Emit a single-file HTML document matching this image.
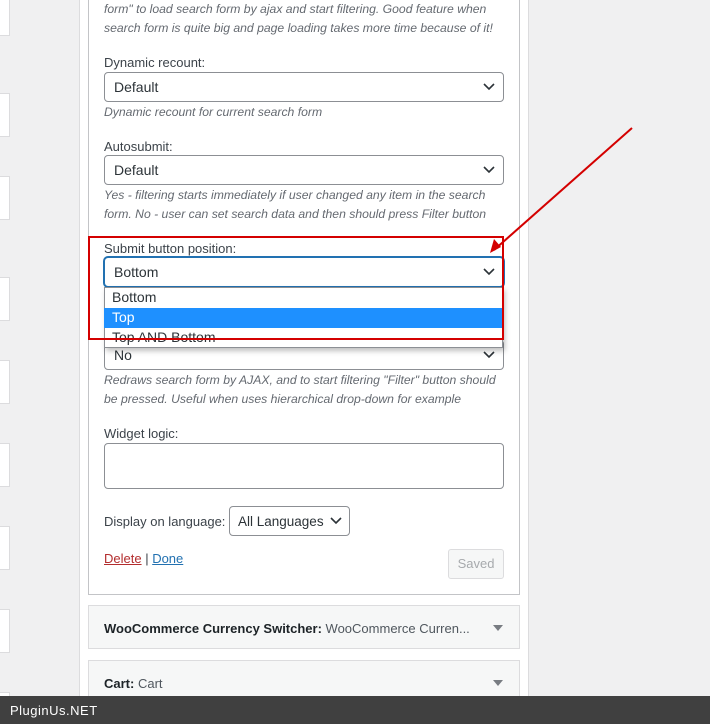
<!DOCTYPE html>
<html><head><meta charset="utf-8"><style>
*{margin:0;padding:0;box-sizing:border-box}
html{width:710px;height:724px;overflow:hidden}
body{width:710px;height:724px;overflow:hidden;background:#f0f0f1;font-family:"Liberation Sans",sans-serif;font-size:13px;color:#3c434a;position:relative}
.lb{position:absolute;left:-2px;width:12px;background:#fff;border:1px solid #dcdcde}
.col{position:absolute;left:79px;top:0;width:450px;height:724px;background:#fff;border-left:1px solid #dcdcde;border-right:1px solid #dcdcde}
.panel{position:absolute;left:88px;width:432px;border:1px solid #c3c4c7;background:#fff}
.a{position:absolute;left:104px}
.lbl{font-size:13px;color:#3c434a}
.desc{font-style:italic;font-size:12.2px;color:#646970;line-height:19px}
.sel{position:absolute;left:104px;width:400px;height:30px;border:1px solid #8c8f94;border-radius:4px;background:#fff;padding:6px 9px;font-size:14px;color:#2c3338}
.chev{position:absolute;right:8px;top:10px}
.opt{position:absolute;left:104px;width:398px;height:20px;padding:1px 8px;font-size:14px;color:#2c3338}
</style></head><body>
<div class="lb" style="top:-5px;height:41px"></div>
<div class="lb" style="top:93px;height:44px"></div>
<div class="lb" style="top:176px;height:44px"></div>
<div class="lb" style="top:277px;height:44px"></div>
<div class="lb" style="top:360px;height:44px"></div>
<div class="lb" style="top:443px;height:44px"></div>
<div class="lb" style="top:526px;height:44px"></div>
<div class="lb" style="top:609px;height:44px"></div>
<div class="lb" style="top:692px;height:30px"></div>
<div class="col"></div>
<div class="panel" style="top:-5px;height:600px"></div>
<div class="a desc" style="top:0px">form" to load search form by ajax and start filtering. Good feature when<br>search form is quite big and page loading takes more time because of it!</div>
<div class="a lbl" style="top:55px">Dynamic recount:</div>
<div class="sel" style="top:72px">Default<svg class="chev" width="12" height="8"><path d="M1 1l5 5 5-5" stroke="#2c3338" stroke-width="1.6" fill="none"/></svg></div>
<div class="a desc" style="top:103px">Dynamic recount for current search form</div>
<div class="a lbl" style="top:139px">Autosubmit:</div>
<div class="sel" style="top:155px">Default<svg class="chev" width="12" height="8"><path d="M1 1l5 5 5-5" stroke="#2c3338" stroke-width="1.6" fill="none"/></svg></div>
<div class="a desc" style="top:186px">Yes - filtering starts immediately if user changed any item in the search<br>form. No - user can set search data and then should press Filter button</div>
<div class="a lbl" style="top:241px">Submit button position:</div>
<div class="sel" style="top:257px;border:1px solid #2271b1;box-shadow:0 0 0 1px #2271b1">Bottom<svg class="chev" width="12" height="8"><path d="M1 1l5 5 5-5" stroke="#2c3338" stroke-width="1.6" fill="none"/></svg></div>
<div class="sel" style="top:340px">No<svg class="chev" width="12" height="8"><path d="M1 1l5 5 5-5" stroke="#2c3338" stroke-width="1.6" fill="none"/></svg></div>
<div style="position:absolute;left:104px;top:287px;width:399px;height:61px;background:#fff;border:1px solid #8c8f94;box-shadow:2px 3px 5px rgba(0,0,0,.25)"></div>
<div class="opt" style="top:288px">Bottom</div>
<div class="opt" style="top:308px;background:#1e90ff;color:#fff">Top</div>
<div class="opt" style="top:328px">Top AND Bottom</div>
<div style="position:absolute;left:88px;top:236px;width:416px;height:104px;border:2px solid #d40000"></div>
<div class="a desc" style="top:371px">Redraws search form by AJAX, and to start filtering "Filter" button should<br>be pressed. Useful when uses hierarchical drop-down for example</div>
<div class="a lbl" style="top:426px">Widget logic:</div>
<div style="position:absolute;left:104px;top:443px;width:400px;height:46px;border:1px solid #8c8f94;border-radius:4px"></div>
<div class="a lbl" style="top:514px">Display on language:</div>
<div style="position:absolute;left:229px;top:506px;width:121px;height:30px;border:1px solid #8c8f94;border-radius:4px;padding:7px 8px;font-size:13.5px;color:#2c3338">All Languages<svg style="position:absolute;right:7px;top:10px" width="12" height="8"><path d="M1 1l5 5 5-5" stroke="#2c3338" stroke-width="1.6" fill="none"/></svg></div>
<div class="a" style="top:551px"><span style="color:#b32d2e;text-decoration:underline">Delete</span> | <span style="color:#2271b1;text-decoration:underline">Done</span></div>
<div style="position:absolute;left:448px;top:549px;width:56px;height:30px;border:1px solid #dcdcde;border-radius:3px;background:#f6f7f7;color:#a7aaad;text-align:center;line-height:28px">Saved</div>
<div class="panel" style="top:605px;height:44px;background:#f6f7f7;border-color:#dcdcde"></div>
<div class="a" style="top:621px;color:#1d2327;font-weight:bold">WooCommerce Currency Switcher: <span style="font-weight:normal;color:#50575e">WooCommerce Curren...</span></div>
<svg style="position:absolute;left:493px;top:624px" width="10" height="8"><path d="M0 1h10L5 7z" fill="#787c82"/></svg>
<div class="panel" style="top:660px;height:50px;background:#f6f7f7;border-color:#dcdcde"></div>
<div class="a" style="top:676px;color:#1d2327;font-weight:bold">Cart: <span style="font-weight:normal;color:#50575e">Cart</span></div>
<svg style="position:absolute;left:493px;top:679px" width="10" height="8"><path d="M0 1h10L5 7z" fill="#787c82"/></svg>
<svg style="position:absolute;left:0;top:0" width="710" height="724"><path d="M632 128L494 250" stroke="#d40000" stroke-width="2"/><path d="M490 253l4-14 7 8z" fill="#d40000"/></svg>
<div style="position:absolute;left:0;top:696px;width:710px;height:28px;background:#404040;color:#fff;font-size:13px;padding:7px 10px;letter-spacing:.5px">PluginUs.NET</div>
</body></html>
